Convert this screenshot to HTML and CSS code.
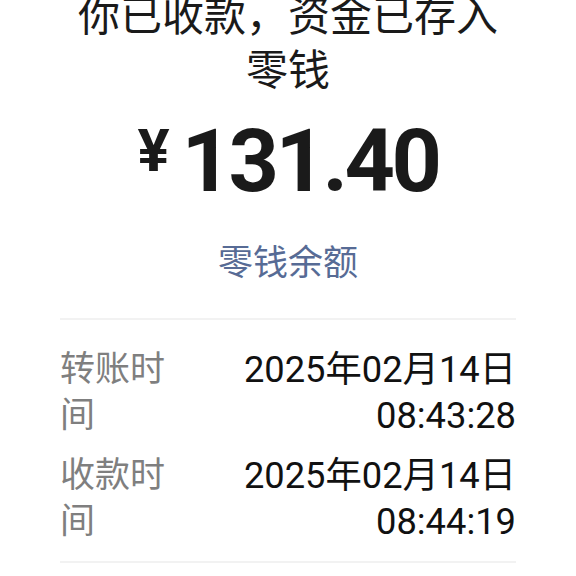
FILE: index.html
```html
<!DOCTYPE html>
<html lang="zh-CN">
<head>
    <meta charset="UTF-8">
    <meta name="viewport" content="width=device-width, initial-scale=1.0">
    <title>收款详情</title>
    <link rel="stylesheet" href="styles.css">
</head>
<body>
    <div class="page">
        <h1 class="title">你已收款，资金已存入零钱</h1>

        <div class="amount">
            <span class="currency">¥</span>
            <span class="num">131.40</span>
        </div>

        <a class="balance-link" href="#">零钱余额</a>

        <!-- Detail rows -->
        <div class="details">
            <div class="row">
                <div class="label">转账时间</div>
                <div class="value">2025年02月14日 08:43:28</div>
            </div>
            <div class="row">
                <div class="label">收款时间</div>
                <div class="value">2025年02月14日 08:44:19</div>
            </div>
        </div>
    </div>
</body>
</html>
```

FILE: styles.css
```css
body {
    margin: 0;
    padding: 0;
    background: #ffffff;
    color: #111111;
    font-family: Roboto, "Noto Sans CJK SC", sans-serif;
    overflow: hidden;
}

.page {
    padding: 0 60px;
}

.title {
    margin: -10px 0 0;
    padding: 0 10px;
    font-size: 42px;
    font-weight: 400;
    line-height: 54px;
    text-align: center;
    color: #1a1a1a;
}

.amount {
    display: flex;
    justify-content: center;
    align-items: flex-start;
    margin-top: 19px;
    color: #1a1a1a;
}

.currency {
    font-size: 60px;
    font-weight: 700;
    line-height: 1;
    margin-top: 4px;
    margin-right: 12px;
}

.num {
    font-size: 88px;
    font-weight: 700;
    line-height: 1;
    letter-spacing: -3.5px;
}

.balance-link {
    display: block;
    margin-top: 34px;
    font-size: 35px;
    line-height: 49px;
    text-align: center;
    color: #576b95;
    text-decoration: none;
}

.details {
    margin-top: 30px;
    padding: 20px 0 9px;
    border-top: 2px solid #f2f2f2;
    border-bottom: 2px solid #f2f2f2;
}

.row {
    display: flex;
    justify-content: space-between;
    padding: 7px 0;
    font-size: 35px;
    line-height: 46px;
}

.label {
    width: 112px;
    color: #7f7f7f;
}

.value {
    flex: 1;
    margin-left: 60px;
    font-size: 36.3px;
    text-align: right;
    color: #111111;
}
```
